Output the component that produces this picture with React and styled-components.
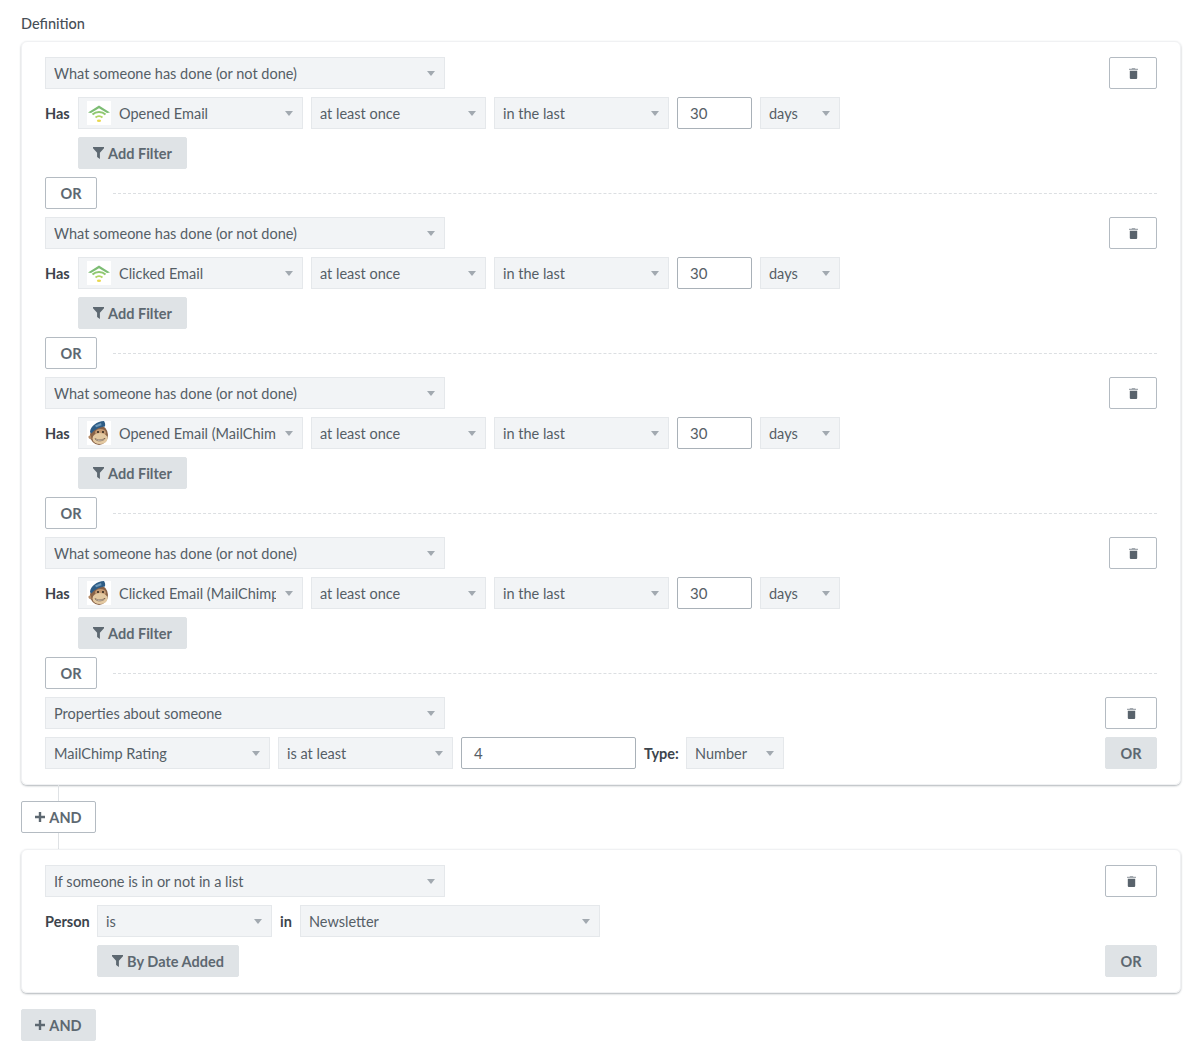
import React from 'react'
import styled, { createGlobalStyle } from 'styled-components'

const GlobalStyle = createGlobalStyle`
  html, body {
    margin: 0;
    padding: 0;
    background: #fff;
    font-family: "Lato", "Open Sans", sans-serif;
    color: #4e5860;
  }
`

const Page = styled.div`
  width: 1200px;
  height: 1060px;
  box-sizing: border-box;
  padding: 15px 19px 0 21px;
  overflow: hidden;
`

const Title = styled.div`
  font-size: 14.5px;
  line-height: 18px;
  font-weight: 500;
  color: #474f57;
  margin-bottom: 8px;
`

const Card = styled.div`
  box-sizing: border-box;
  border-radius: 6px;
  border: 1px solid #f0f1f3;
  box-shadow: 0 1px 2px rgba(80, 90, 100, 0.45);
  padding: 15px 23px;
  display: flex;
  flex-direction: column;
  gap: 8px;
`

const Row = styled.div`
  display: flex;
  align-items: center;
  gap: 8px;
  height: 32px;
`

const Spacer = styled.div`
  flex: 1;
`

const RowLabel = styled.div`
  font-size: 14.5px;
  font-weight: 700;
  color: #3c444c;
  width: ${p => p.$width}px;
  flex: none;
`

const SelectBox = styled.div`
  box-sizing: border-box;
  width: ${p => p.$width}px;
  height: 32px;
  flex: none;
  display: flex;
  align-items: center;
  padding-left: 8px;
  background: #f2f4f6;
  border: 1px solid #e5e8eb;
  position: relative;
  font-size: 14.5px;
  color: #555e66;
  white-space: nowrap;
`

const SelectText = styled.span`
  display: block;
  overflow: hidden;
  flex: 1;
  margin-right: 26px;
`

const Caret = styled.span`
  position: absolute;
  right: 9px;
  top: 13px;
  width: 0;
  height: 0;
  border-left: 4.5px solid transparent;
  border-right: 4.5px solid transparent;
  border-top: 5px solid #a2a9b0;
`

const IconSlot = styled.span`
  width: 24px;
  height: 24px;
  flex: none;
  background: #fff;
  margin-right: 8px;
  display: flex;
`

const Input = styled.div`
  box-sizing: border-box;
  width: ${p => p.$width}px;
  height: 32px;
  flex: none;
  display: flex;
  align-items: center;
  padding-left: 12px;
  background: #fff;
  border: 1px solid #a9b1b8;
  border-radius: 2px;
  font-size: 15px;
  color: #555e66;
`

const Button = styled.div`
  box-sizing: border-box;
  height: 32px;
  width: ${p => p.$width}px;
  flex: none;
  margin-left: ${p => p.$indent || 0}px;
  display: flex;
  align-items: center;
  justify-content: center;
  gap: 4px;
  border-radius: 2px;
  font-size: 14.5px;
  font-weight: 700;
  color: #5d6871;
  background: ${p => (p.$outline ? '#fff' : '#dfe3e6')};
  border: 1px solid ${p => (p.$outline ? '#b4bbc2' : '#dfe3e6')};
`

const DashedLine = styled.div`
  flex: 1;
  border-top: 1px dashed #dcdfe2;
  margin-left: 8px;
`

const Connector = styled.div`
  width: 1px;
  height: 16px;
  margin-left: 37px;
  background: #dfe2e5;
`

const BottomButton = styled.div`
  margin-top: 16px;
`

const FilterIcon = () => (
  <svg width="11" height="12" viewBox="0 0 11 12">
    <path d="M0 0h11v1.2L6.9 5.8V12L4.1 10V5.8L0 1.2z" fill="#5d6871" />
  </svg>
)

const PlusIcon = () => (
  <svg width="10" height="10" viewBox="0 0 10 10">
    <path d="M3.8 0h2.4v3.8H10v2.4H6.2V10H3.8V6.2H0V3.8h3.8z" fill="#5d6871" />
  </svg>
)

const TrashIcon = () => (
  <svg width="9" height="11" viewBox="0 0 9 11">
    <path d="M3 0h3l.4.8H9V2H0V.8h2.6z" fill="#a3a9af" />
    <path d="M.8 2.8h7.4V10a1 1 0 0 1-1 1H1.8a1 1 0 0 1-1-1z" fill="#59636c" />
  </svg>
)

const WifiLogo = () => (
  <svg width="24" height="24" viewBox="0 0 24 24" fill="none">
    <path d="M1 11.5 12 4.5l11 7-3 .4-8-4.6-8 4.6z" fill="#7dbd74" />
    <path d="M5.5 13.5C9 10.3 15 10.3 18.5 13.5" stroke="#8fc86f" strokeWidth="2" />
    <path d="M8.5 16.5c2-1.6 5-1.6 7 0" stroke="#b2d562" strokeWidth="1.8" />
    <ellipse cx="12" cy="19.7" rx="2.1" ry="1.3" fill="#e9d84e" />
  </svg>
)

const MonkeyLogo = () => (
  <svg width="24" height="24" viewBox="0 0 24 24">
    <ellipse cx="12" cy="14" rx="9" ry="10" fill="#8a6347" />
    <path d="M3 11C3.5 5 10 .5 17 0c1 1.5 1.5 3 1 5.5C13 6 8 8 4.5 12.5z" fill="#2f5d86" />
    <path d="M8 4.5 14 2l.6 2.2-5.5 2z" fill="#6d97b8" />
    <path d="M4 15c-1-1-3-.3-2.500 1.500.4 1.400 2 2 3 1.500z" fill="#b58a66" />
    <ellipse cx="13.500" cy="11.500" rx="5.500" ry="3.500" fill="#c49a73" />
    <ellipse cx="13" cy="17.500" rx="7.500" ry="5.500" fill="#e3c9a2" />
    <path d="M8 17.500c3 1.800 7 1.800 10-.3-.8 3-9 4-10 .3z" fill="#fff" stroke="#5e4431" strokeWidth=".6" />
    <circle cx="11" cy="11" r="1" fill="#2b2019" />
    <circle cx="16" cy="11" r="1" fill="#2b2019" />
  </svg>
)

const Select = ({ width, logo, children }) => (
  <SelectBox $width={width}>
    {logo && <IconSlot>{logo === 'wifi' ? <WifiLogo /> : <MonkeyLogo />}</IconSlot>}
    <SelectText>{children}</SelectText>
    <Caret />
  </SelectBox>
)

const TrashButton = ({ width }) => (
  <Button $outline $width={width}>
    <TrashIcon />
  </Button>
)

const metrics = [
  { name: 'Opened Email', logo: 'wifi' },
  { name: 'Clicked Email', logo: 'wifi' },
  { name: 'Opened Email (MailChimp)', logo: 'monkey' },
  { name: 'Clicked Email (MailChimp)', logo: 'monkey' },
]

const MetricCondition = ({ name, logo }) => (
  <>
    <Row>
      <Select width={400}>What someone has done (or not done)</Select>
      <Spacer />
      <TrashButton width={48} />
    </Row>
    <Row>
      <RowLabel $width={25}>Has</RowLabel>
      <Select width={225} logo={logo}>{name}</Select>
      <Select width={175}>at least once</Select>
      <Select width={175}>in the last</Select>
      <Input $width={75}>30</Input>
      <Select width={80}>days</Select>
    </Row>
    <Row>
      <Button $width={109} $indent={33}>
        <FilterIcon />
        Add Filter
      </Button>
    </Row>
    <Row>
      <Button $outline $width={52}>OR</Button>
      <DashedLine />
    </Row>
  </>
)

const App = () => (
  <Page>
    <GlobalStyle />
    <Title>Definition</Title>
    <Card>
      {metrics.map(m => (
        <MetricCondition key={m.name} name={m.name} logo={m.logo} />
      ))}
      <Row>
        <Select width={400}>Properties about someone</Select>
        <Spacer />
        <TrashButton width={52} />
      </Row>
      <Row>
        <Select width={225}>MailChimp Rating</Select>
        <Select width={175}>is at least</Select>
        <Input $width={175}>4</Input>
        <RowLabel $width={34}>Type:</RowLabel>
        <Select width={98}>Number</Select>
        <Spacer />
        <Button $width={52}>OR</Button>
      </Row>
    </Card>
    <Connector />
    <Button $outline $width={75}>
      <PlusIcon />
      AND
    </Button>
    <Connector />
    <Card>
      <Row>
        <Select width={400}>If someone is in or not in a list</Select>
        <Spacer />
        <TrashButton width={52} />
      </Row>
      <Row>
        <RowLabel $width={44}>Person</RowLabel>
        <Select width={175}>is</Select>
        <RowLabel $width={12}>in</RowLabel>
        <Select width={300}>Newsletter</Select>
      </Row>
      <Row>
        <Button $width={142} $indent={52}>
          <FilterIcon />
          By Date Added
        </Button>
        <Spacer />
        <Button $width={52}>OR</Button>
      </Row>
    </Card>
    <BottomButton>
      <Button $width={75}>
        <PlusIcon />
        AND
      </Button>
    </BottomButton>
  </Page>
)

export default App
